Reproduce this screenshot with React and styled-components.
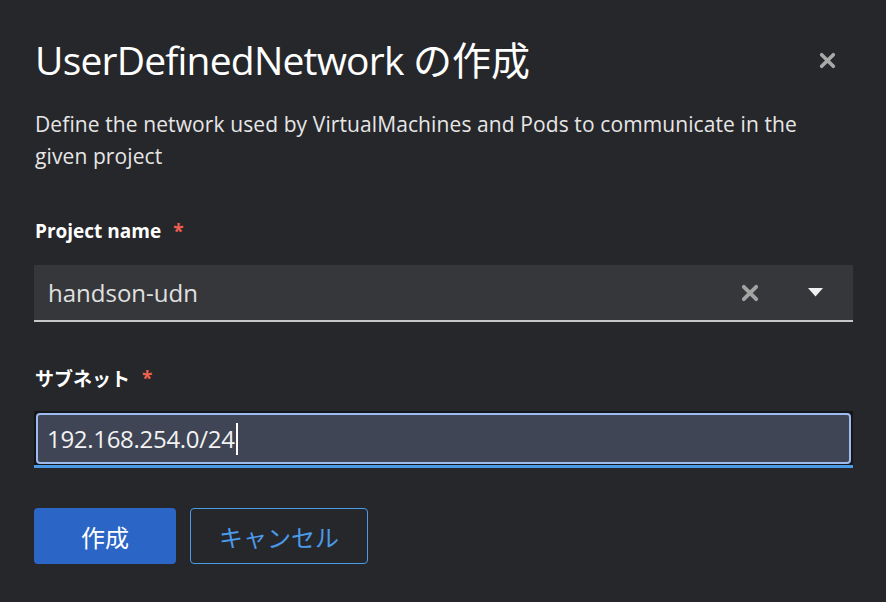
import React from "react";
import styled, { createGlobalStyle } from "styled-components";

const Global = createGlobalStyle`
  html, body { margin: 0; padding: 0; background: #26272b; }
  body { font-family: "Open Sans", "Noto Sans CJK JP", sans-serif; color: #e0e0e0; }
  * { box-sizing: border-box; }
`;

const Modal = styled.div`
  width: 886px;
  height: 602px;
  background: #26272b;
  padding: 32px 33px 0 34px;
  display: flex;
  flex-direction: column;
`;

const Header = styled.div`
  display: flex;
  align-items: center;
  justify-content: space-between;
  height: 52px;
  padding-left: 1px;
`;

const Title = styled.h1`
  margin: 0;
  font-family: "Open Sans", "Noto Sans CJK JP", sans-serif;
  font-weight: 500;
  font-size: 39px;
  letter-spacing: -0.8px;
  color: #ffffff;
`;

const TitleJp = styled.span`
  font-family: "Noto Sans CJK JP", sans-serif;
  font-weight: 400;
  letter-spacing: 0;
`;

const CloseButton = styled.button`
  background: none;
  border: none;
  padding: 0;
  margin-right: 17px;
  margin-top: 4px;
  width: 18px;
  height: 18px;
  display: flex;
  align-items: center;
  justify-content: center;
  color: #a9a9a9;
`;

const Description = styled.p`
  margin: 24px 0 0 1px;
  width: 790px;
  font-size: 21px;
  line-height: 32px;
  letter-spacing: 0.1px;
  color: #e6e6e6;
`;

const Field = styled.div`
  display: flex;
  flex-direction: column;
  margin-top: ${(p) => p.$top}px;
`;

const Label = styled.label`
  display: flex;
  align-items: center;
  height: 30px;
  padding-left: 1px;
  font-size: 19px;
  font-weight: 700;
  color: #ffffff;
  font-family: "Open Sans", "Noto Sans CJK JP", sans-serif;
`;

const Required = styled.span`
  color: #f0604e;
  margin-left: 12px;
  font-size: 19px;
  font-weight: 700;
`;

const Select = styled.div`
  margin-top: 19px;
  height: 57px;
  background: #36373b;
  border-bottom: 2px solid #c7c7c7;
  display: flex;
  align-items: center;
  padding: 0 30px 0 14px;
`;

const SelectValue = styled.span`
  flex: 1;
  font-size: 24px;
  color: #e0e0e0;
`;

const IconButton = styled.span`
  display: flex;
  align-items: center;
  justify-content: center;
  color: ${(p) => p.$color};
  margin-left: ${(p) => p.$gap}px;
`;

const InputBox = styled.div`
  margin-top: 18px;
  height: 57px;
  background: #151619;
  border-bottom: 3px solid #4b9ae8;
  padding: 2px 2px 1px 2px;
  display: flex;
`;

const InputInner = styled.div`
  flex: 1;
  background: #3f4555;
  border: 2px solid #9dbbf0;
  border-radius: 4px;
  display: flex;
  align-items: center;
  padding-left: 9px;
  font-size: 24px;
  letter-spacing: -0.3px;
  color: #f2f2f2;
`;

const Caret = styled.span`
  display: inline-block;
  width: 2px;
  height: 32px;
  background: #ffffff;
  margin-left: 1px;
`;

const Actions = styled.div`
  display: flex;
  gap: 14px;
  margin-top: 40px;
`;

const Button = styled.button`
  height: 56px;
  padding: 0 ${(p) => p.$pad}px;
  border-radius: 4px;
  font-family: "Noto Sans CJK JP", sans-serif;
  font-size: 24px;
  cursor: pointer;
  background: ${(p) => (p.$primary ? "#2b66c7" : "transparent")};
  color: ${(p) => (p.$primary ? "#ffffff" : "#4b9ae8")};
  border: ${(p) => (p.$primary ? "none" : "1px solid #4b9ae8")};
`;

const XIcon = ({ size = 16 }) => (
  <svg width={size} height={size} viewBox="0 0 16 16">
    <path d="M2.5 2.5 L13.5 13.5 M13.5 2.5 L2.5 13.5" stroke="currentColor" strokeWidth="3.4" strokeLinecap="round" />
  </svg>
);

const Caret3 = () => (
  <svg width="15" height="9" viewBox="0 0 15 9">
    <path d="M0 0 H15 L7.5 8.5 Z" fill="currentColor" />
  </svg>
);

export default function App() {
  return (
    <>
      <Global />
      <Modal>
        <Header>
          <Title>
            UserDefinedNetwork <TitleJp>の作成</TitleJp>
          </Title>
          <CloseButton aria-label="Close">
            <XIcon size={17} />
          </CloseButton>
        </Header>
        <Description>
          Define the network used by VirtualMachines and Pods to communicate in the given project
        </Description>
        <Field $top={44}>
          <Label>
            Project name<Required>*</Required>
          </Label>
          <Select>
            <SelectValue>handson-udn</SelectValue>
            <IconButton $color="#a3a3a3" $gap={0}>
              <XIcon size={18} />
            </IconButton>
            <IconButton $color="#f0f0f0" $gap={49}>
              <Caret3 />
            </IconButton>
          </Select>
        </Field>
        <Field $top={41}>
          <Label>
            サブネット<Required>*</Required>
          </Label>
          <InputBox>
            <InputInner>
              192.168.254.0/24
              <Caret />
            </InputInner>
          </InputBox>
        </Field>
        <Actions>
          <Button $primary $pad={47}>作成</Button>
          <Button $pad={28}>キャンセル</Button>
        </Actions>
      </Modal>
    </>
  );
}
